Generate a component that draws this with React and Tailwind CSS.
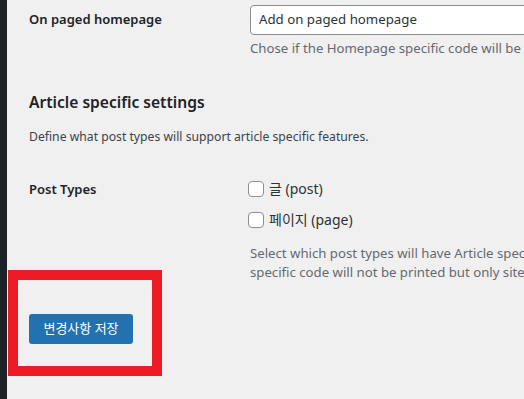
import React from 'react';

function Checkbox({ label }) {
  return (
    <label className="flex h-[20px] items-center gap-[5px] text-[14px] leading-[20px] text-[#2c3338]">
      <span className="block h-[16px] w-[16px] rounded-[4px] border border-[#8c8f94] bg-white" />
      {label}
    </label>
  );
}

export default function App() {
  return (
    <div
      className="flex h-[399px] w-[524px] overflow-hidden bg-[#f0f0f1]"
      style={{ fontFamily: '"Noto Sans", "Noto Sans CJK KR", sans-serif' }}
    >
      <div className="w-[7px] shrink-0 bg-[#1d2327]" />
      <div className="relative flex-1 pl-[22px]">
        <div className="flex pt-[5px]">
          <div className="flex h-[30px] w-[221px] shrink-0 items-center text-[13px] font-semibold text-[#1d2327]">
            On paged homepage
          </div>
          <div className="shrink-0">
            <div className="flex h-[30px] w-[320px] items-center rounded-[4px] border border-[#8c8f94] bg-white px-[8px] text-[13.25px] text-[#2c3338]">
              Add on paged homepage
            </div>
            <p className="mt-[4px] whitespace-nowrap text-[13.2px] leading-[19px] text-[#646970]">
              Chose if the Homepage specific code will be printed on paged homepage
            </p>
          </div>
        </div>

        <h2 className="mt-[32px] text-[15.6px] font-semibold leading-[24px] text-[#1d2327]">
          Article specific settings
        </h2>
        <p className="mt-[13px] text-[12.2px] leading-[19px] text-[#3c434a]">
          Define what post types will support article specific features.
        </p>

        <div className="mt-[33px] flex">
          <div className="w-[219px] shrink-0 text-[13px] font-semibold leading-[20px] text-[#1d2327]">
            Post Types
          </div>
          <div className="shrink-0">
            <div className="flex flex-col gap-[11px]">
              <Checkbox label="글 (post)" />
              <Checkbox label="페이지 (page)" />
            </div>
            <p className="ml-[2px] mt-[14px] whitespace-nowrap text-[13.2px] leading-[19px] text-[#646970]">
              Select which post types will have Article specific features. Other
              <br />
              specific code will not be printed but only site wide code.
            </p>
          </div>
        </div>

        <button className="mt-[32px] h-[30px] w-[104px] rounded-[3px] bg-[#2271b1] text-[13px] text-white">
          변경사항 저장
        </button>

        <div className="absolute left-[1px] top-[270px] h-[106px] w-[154px] border-[10px] border-[#ed1c24]" />
      </div>
    </div>
  );
}
